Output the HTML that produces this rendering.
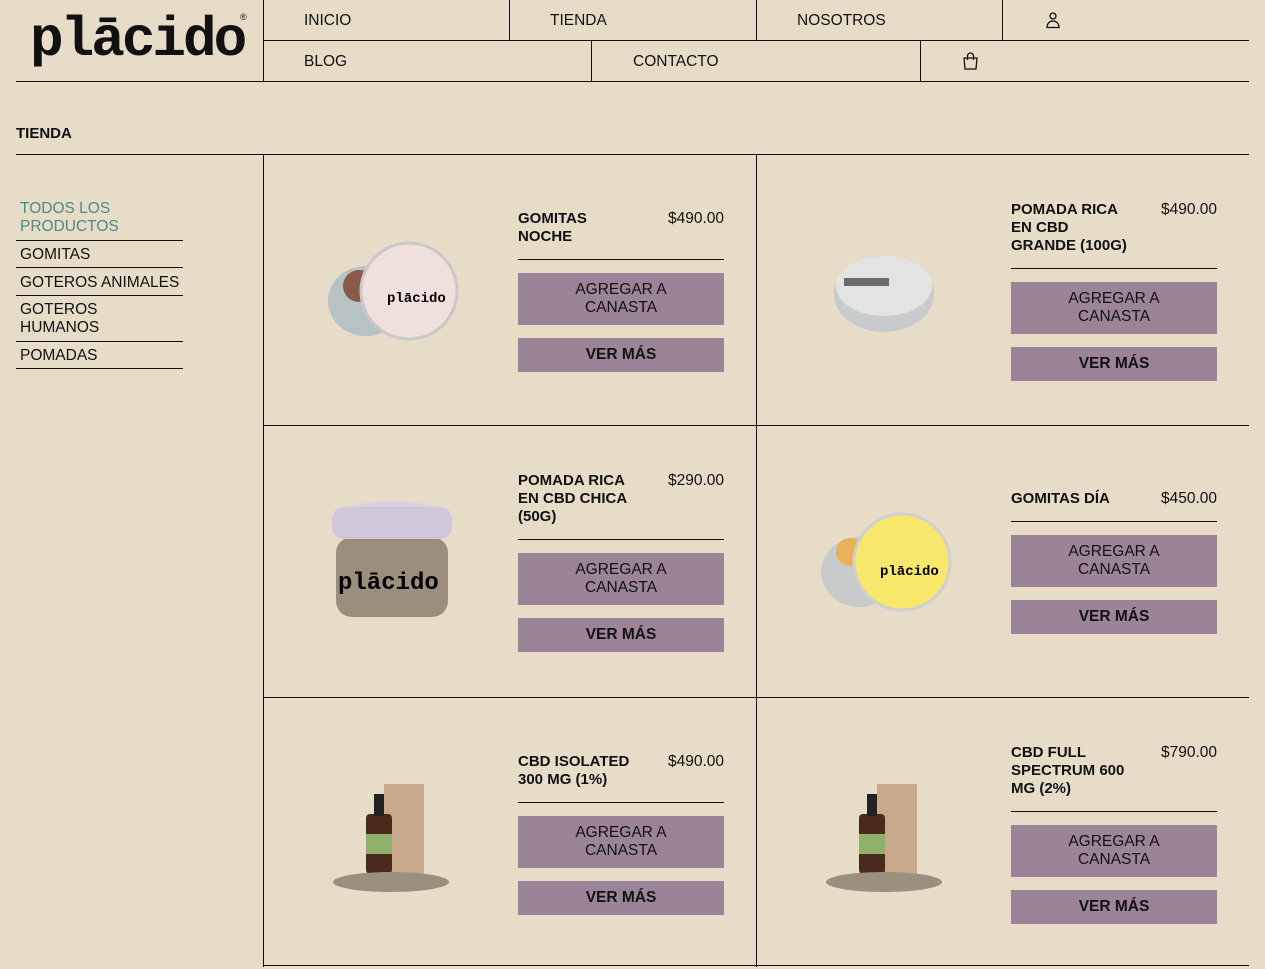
<!DOCTYPE html>
<html><head><meta charset="utf-8"><style>
*{margin:0;padding:0;box-sizing:border-box}
body{width:1265px;height:967px;background:#e7dcc7;font-family:"Liberation Sans",Arial,sans-serif;color:#111;position:relative;overflow:hidden}
.a{position:absolute}
.h{background:#111;height:1px}
.v{background:#111;width:1px}
.nav{font-size:15.5px;line-height:18px}
.side{font-size:15.5px;line-height:18px;left:20px}
.cell{position:absolute;width:493px;height:271px;display:flex;align-items:center}
.img{width:254px;display:flex;justify-content:center;align-items:center}
.txt{width:206px;margin-left:0}
.tt{display:flex;justify-content:space-between;font-size:15px;line-height:18px;padding-bottom:13px;border-bottom:1px solid #111}
.tt b{font-weight:700}
.pr{font-size:15.5px}
.b1{background:#9b8497;height:52px;margin-top:13px;text-align:center;font-size:15.5px;line-height:18px;padding-top:8px}
.b2{background:#9b8497;height:34px;margin-top:13px;text-align:center;font-size:15.5px;font-weight:700;line-height:34px}
</style></head><body>
<div class="a" style="left:30px;top:8px;font-family:'Liberation Mono',monospace;font-weight:700;font-size:56px;letter-spacing:-3px;line-height:64px">plācido</div>
<div class="a" style="left:240px;top:12px;font-size:9px">®</div>
<div class="a v" style="left:263px;top:0;height:81px"></div>
<div class="a v" style="left:509px;top:0;height:40px"></div>
<div class="a v" style="left:756px;top:0;height:40px"></div>
<div class="a v" style="left:1002px;top:0;height:40px"></div>
<div class="a v" style="left:591px;top:40px;height:41px"></div>
<div class="a v" style="left:920px;top:40px;height:41px"></div>
<div class="a h" style="left:263px;top:40px;width:986px"></div>
<div class="a h" style="left:16px;top:81px;width:1233px"></div>
<div class="a nav" style="left:304px;top:12px">INICIO</div>
<div class="a nav" style="left:550px;top:12px">TIENDA</div>
<div class="a nav" style="left:797px;top:12px">NOSOTROS</div>
<svg class="a" style="left:1045px;top:11px" width="16" height="18" viewBox="0 0 16 18" fill="none" stroke="#111" stroke-width="1.3"><circle cx="8" cy="5" r="3"/><path d="M2 16.5C2 12 5 10 8 10s6 2 6 6.5z"/></svg>
<div class="a nav" style="left:304px;top:53px">BLOG</div>
<div class="a nav" style="left:633px;top:53px">CONTACTO</div>
<svg class="a" style="left:962px;top:52px" width="17" height="18" viewBox="0 0 17 18" fill="none" stroke="#111" stroke-width="1.3"><path d="M2 6h13l-1 11H3z"/><path d="M5.5 8V4a3 3 0 0 1 6 0v4"/></svg>

<div class="a" style="left:16px;top:125px;font-size:15px;font-weight:700">TIENDA</div>
<div class="a h" style="left:16px;top:154px;width:1233px"></div>
<div class="a v" style="left:263px;top:154px;height:813px"></div>
<div class="a v" style="left:756px;top:154px;height:813px"></div>
<div class="a h" style="left:263px;top:425px;width:986px"></div>
<div class="a h" style="left:263px;top:697px;width:986px"></div>
<div class="a h" style="left:263px;top:965px;width:986px"></div>

<div class="a side" style="top:200px;color:#4b8a88">TODOS LOS<br>PRODUCTOS</div>
<div class="a h" style="left:16px;top:240px;width:167px"></div>
<div class="a side" style="top:246px">GOMITAS</div>
<div class="a h" style="left:16px;top:267px;width:167px"></div>
<div class="a side" style="top:274px">GOTEROS ANIMALES</div>
<div class="a h" style="left:16px;top:295px;width:167px"></div>
<div class="a side" style="top:301px">GOTEROS<br>HUMANOS</div>
<div class="a h" style="left:16px;top:341px;width:167px"></div>
<div class="a side" style="top:347px">POMADAS</div>
<div class="a h" style="left:16px;top:368px;width:167px"></div>

<div class="cell" style="left:264px;top:155px"><div class="img"><svg width="140" height="110"><ellipse cx="45" cy="65" rx="38" ry="35" fill="#b7c2c4"/><circle cx="38" cy="50" r="16" fill="#8a5a46"/><circle cx="60" cy="58" r="14" fill="#9a6752"/><circle cx="88" cy="55" r="48" fill="#efe0dc" stroke="#c9c9c9" stroke-width="3"/><text x="66" y="66" font-family="Liberation Mono" font-weight="700" font-size="14">plācido</text></svg></div>
<div class="txt"><div class="tt"><b>GOMITAS<br>NOCHE</b><span class="pr">$490.00</span></div><div class="b1">AGREGAR A<br>CANASTA</div><div class="b2">VER MÁS</div></div></div>
<div class="cell" style="left:757px;top:155px"><div class="img"><svg width="110" height="90"><ellipse cx="55" cy="48" rx="50" ry="38" fill="#c8cbcc"/><ellipse cx="55" cy="40" rx="48" ry="30" fill="#e2e3e2"/><rect x="15" y="32" width="45" height="8" fill="#6b6b6b"/></svg></div>
<div class="txt"><div class="tt"><b>POMADA RICA<br>EN CBD<br>GRANDE (100G)</b><span class="pr">$490.00</span></div><div class="b1">AGREGAR A<br>CANASTA</div><div class="b2">VER MÁS</div></div></div>
<div class="cell" style="left:264px;top:426px"><div class="img"><svg width="130" height="130"><rect x="10" y="40" width="112" height="80" rx="16" fill="#9b8e7c"/><ellipse cx="66" cy="22" rx="60" ry="18" fill="#d9d1e2"/><rect x="6" y="10" width="120" height="32" rx="12" fill="#d0c7da"/><text x="12" y="92" font-family="Liberation Mono" font-weight="700" font-size="24">plācido</text></svg></div>
<div class="txt"><div class="tt"><b>POMADA RICA<br>EN CBD CHICA<br>(50G)</b><span class="pr">$290.00</span></div><div class="b1">AGREGAR A<br>CANASTA</div><div class="b2">VER MÁS</div></div></div>
<div class="cell" style="left:757px;top:426px"><div class="img"><svg width="140" height="110"><ellipse cx="45" cy="65" rx="38" ry="35" fill="#c7cbcc"/><circle cx="36" cy="45" r="14" fill="#e8b15a"/><circle cx="58" cy="55" r="13" fill="#d99a45"/><circle cx="88" cy="55" r="48" fill="#f7e76a" stroke="#d0d0d0" stroke-width="3"/><text x="66" y="68" font-family="Liberation Mono" font-weight="700" font-size="14">plācido</text></svg></div>
<div class="txt"><div class="tt"><b>GOMITAS DÍA</b><span class="pr">$450.00</span></div><div class="b1">AGREGAR A<br>CANASTA</div><div class="b2">VER MÁS</div></div></div>
<div class="cell" style="left:264px;top:698px"><div class="img"><svg width="130" height="120"><rect x="58" y="10" width="40" height="90" fill="#c8a98b"/><rect x="40" y="40" width="26" height="60" rx="4" fill="#4a2a1c"/><rect x="48" y="20" width="10" height="22" fill="#222"/><rect x="40" y="60" width="26" height="20" fill="#8fb06a"/><ellipse cx="65" cy="108" rx="58" ry="10" fill="#9b9080"/></svg></div>
<div class="txt"><div class="tt"><b>CBD ISOLATED<br>300 MG (1%)</b><span class="pr">$490.00</span></div><div class="b1">AGREGAR A<br>CANASTA</div><div class="b2">VER MÁS</div></div></div>
<div class="cell" style="left:757px;top:698px"><div class="img"><svg width="130" height="120"><rect x="58" y="10" width="40" height="90" fill="#c8a98b"/><rect x="40" y="40" width="26" height="60" rx="4" fill="#4a2a1c"/><rect x="48" y="20" width="10" height="22" fill="#222"/><rect x="40" y="60" width="26" height="20" fill="#8fb06a"/><ellipse cx="65" cy="108" rx="58" ry="10" fill="#9b9080"/></svg></div>
<div class="txt"><div class="tt"><b>CBD FULL<br>SPECTRUM 600<br>MG (2%)</b><span class="pr">$790.00</span></div><div class="b1">AGREGAR A<br>CANASTA</div><div class="b2">VER MÁS</div></div></div>
</body></html>
